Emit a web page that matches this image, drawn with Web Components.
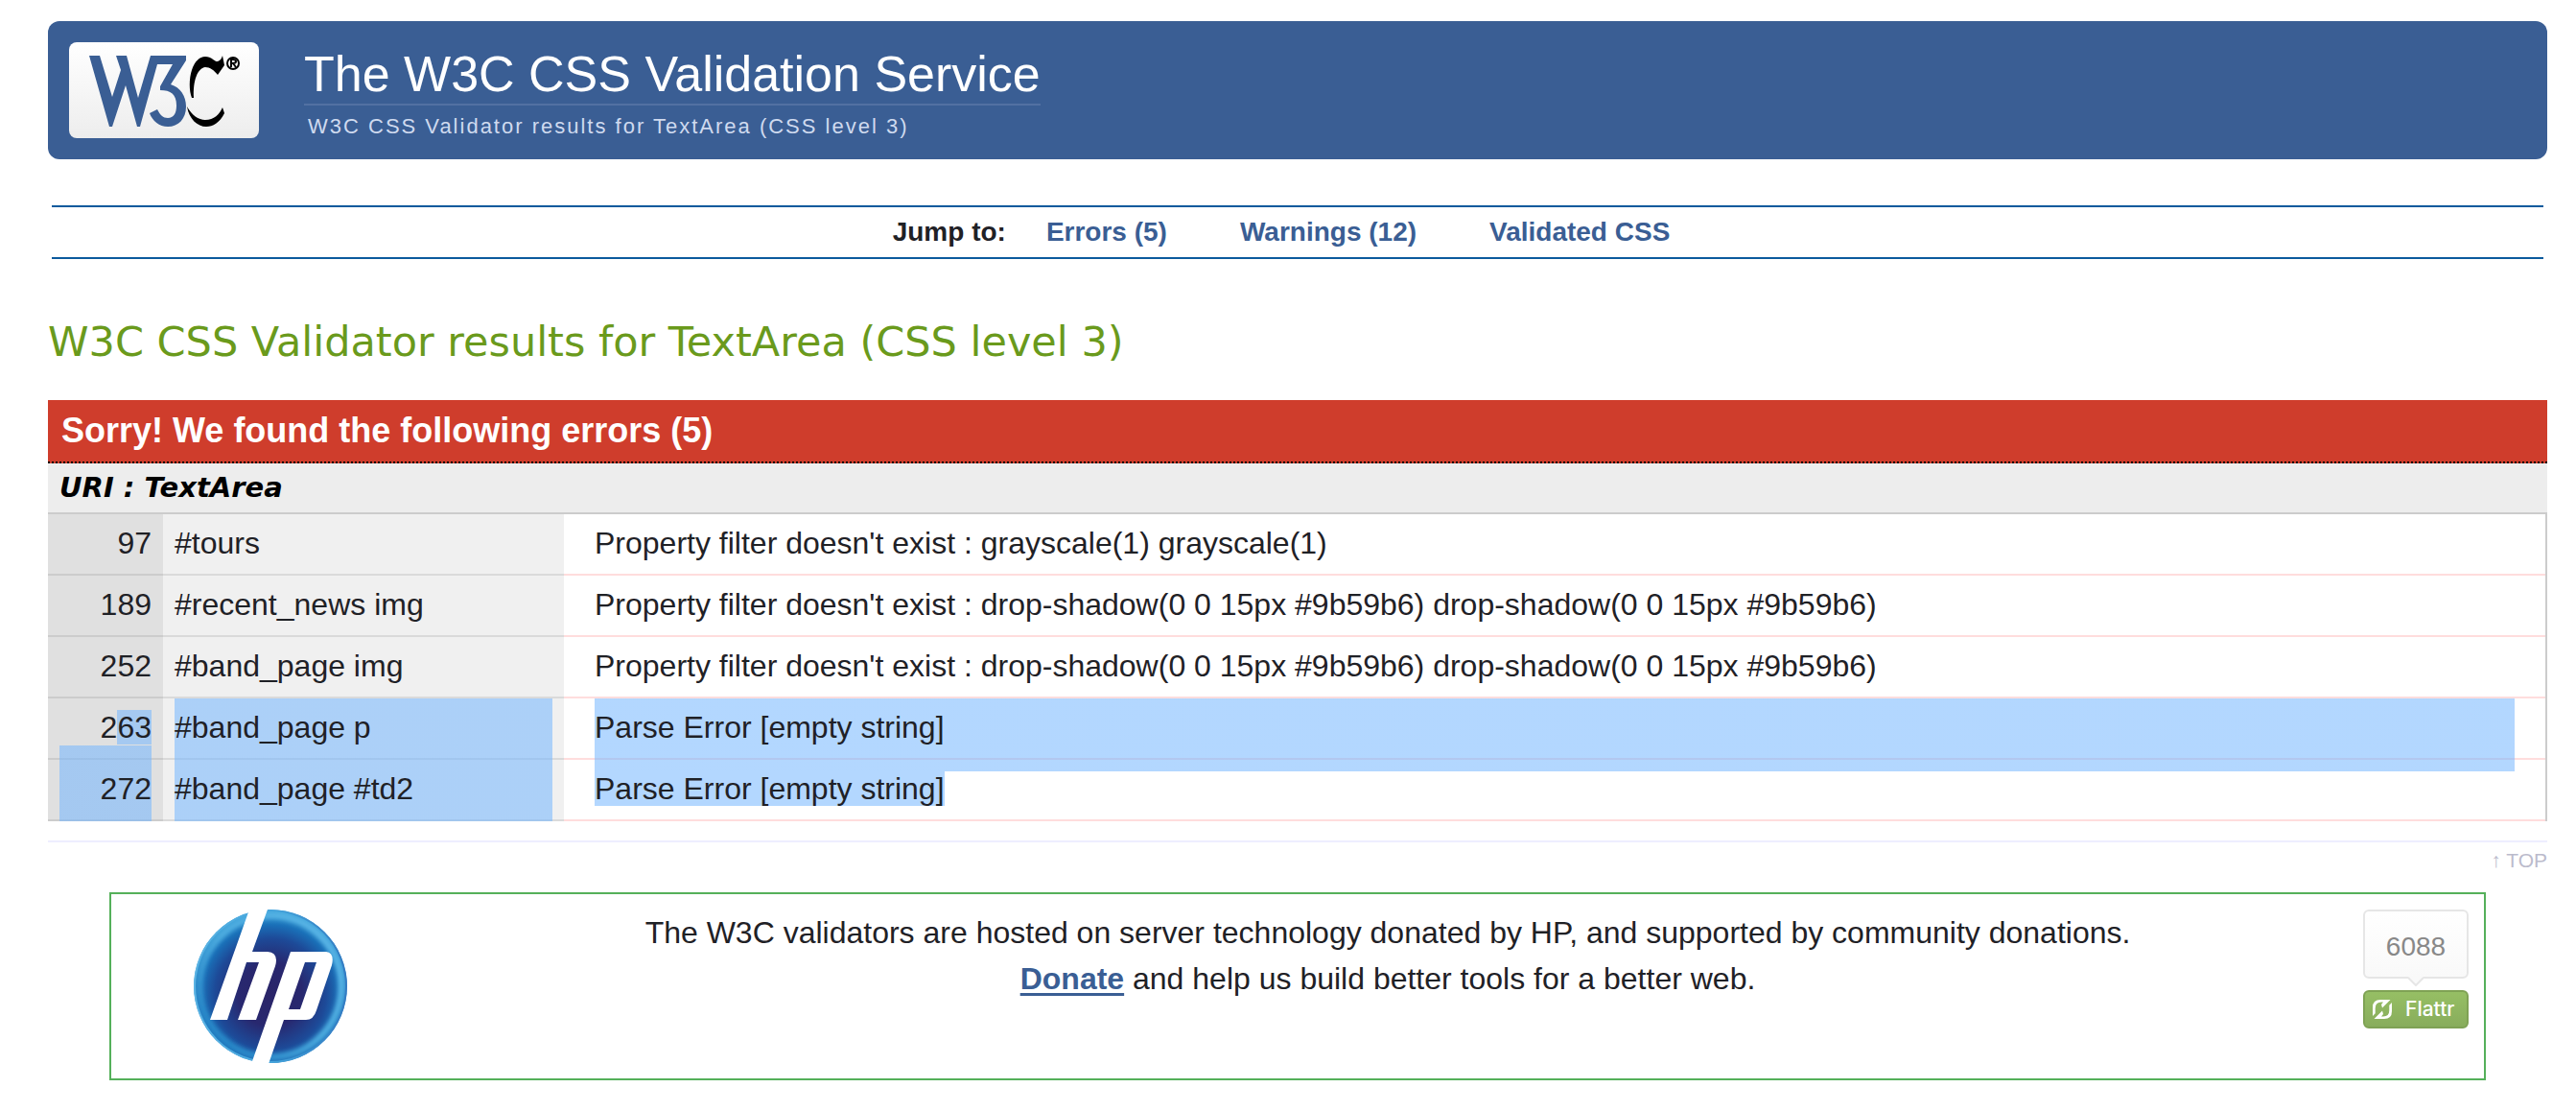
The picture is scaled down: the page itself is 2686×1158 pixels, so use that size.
<!DOCTYPE html>
<html lang="en">
<head>
<meta charset="utf-8">
<meta name="viewport" content="width=device-width, initial-scale=1">
<title>W3C CSS Validator results for TextArea (CSS level 3)</title>
<style>
  body {
    margin: 0;
    background: #fff;
    color: #1f2126;
    font-family: "Liberation Sans", Arial, sans-serif;
    font-size: 32px;
  }
</style>
</head>
<body>
<validator-page></validator-page>

<script>
  class ShadowElement extends HTMLElement {
    constructor() {
      super();
      this.attachShadow({ mode: 'open' }).innerHTML = this.constructor.markup;
    }
  }

  class W3cLogo extends ShadowElement {
    static markup = `
      <style>
        :host { display: block; }
        svg { display: block; width: 198px; height: 100px; border-radius: 8px;
              background: linear-gradient(#fff, #ededed); }
      </style>
      <svg viewBox="0 0 198 100" role="img" aria-label="W3C">
        <path fill="#3a5e94" d="M21 14H32L45 57 54 29 49 14H60L72 58 85 14H122V19L106 44C116 47 122 56 122 67C122 80 114 88 103 88C94 88 87 82 84 74L92 70C95 76 98 79 103 79C109 79 112 74 112 66C112 54 106 50 95 50V46L108 23H92L74 88H71L59 45 45 88H42Z"/>
        <path d="M160 14L162 24 155 34C151 29 147 26 142 26C134 27 129 40 130 58H128C125 51 125 38 128 29C131 20 136 15 142 15C149 15 152 21 155 20C158 19 159 17 160 14Z"/>
        <path d="M123 67C128 76 135 81 142 81C151 81 157 75 160 68L162 74C157 84 150 88 143 88C134 88 125 80 123 67Z"/>
        <circle cx="171" cy="22" r="6" fill="none" stroke="#000" stroke-width="2"/>
        <path fill="none" stroke="#000" stroke-width="2" d="M169 26V18H171Q174 18 174 20Q174 22 171 22H169M171 22L174 26"/>
      </svg>`;
  }

  class SiteBanner extends ShadowElement {
    static markup = `
      <style>
        :host { display: block; }
        header { display: flex; align-items: flex-start; gap: 47px; min-height: 122px;
                 padding: 22px 22px 0; background: #3a5e94; border-radius: 12px; }
        h1 { margin: 0; padding-top: 2px; border-bottom: 2px solid #5271a2; color: #fff;
             font-size: 52px; font-weight: normal; line-height: 62px; }
        p { margin: 0; padding: 6px 4px 0; color: #cfdaef; font-size: 22px; line-height: 32px;
            letter-spacing: 2px; }
      </style>
      <header>
        <w3c-logo></w3c-logo>
        <div>
          <h1><slot name="title"></slot></h1>
          <p><slot name="tagline"></slot></p>
        </div>
      </header>`;
  }

  class JumpNav extends ShadowElement {
    static markup = `
      <style>
        :host { display: block; margin: 48px 4px 0; }
        nav { display: flex; justify-content: center; gap: 8px; border: 2px solid #0b5a9d;
              border-width: 2px 0; font-size: 28px; font-weight: bold; line-height: 52px; }
        ::slotted(a) { padding: 0 34px; color: #3a5e94; text-decoration: none; }
      </style>
      <nav aria-label="Jump to"><span>Jump to:</span><slot></slot></nav>`;
  }

  class ErrorReport extends ShadowElement {
    static markup = `
      <style>
        :host { display: block; --sel: rgb(114 181 255 / .54);
                --fill: linear-gradient(var(--sel), var(--sel)); }
        h3 { margin: 0; padding: 0 14px; background: #cf3d2c; border-bottom: 2px dotted #000;
             color: #fff; font-size: 36px; line-height: 64px; }
        h4 { margin: 0; padding: 0 12px; background: #ededed; border-bottom: 2px solid #ccc;
             color: #000; font: italic bold 29px/51px "DejaVu Sans", Verdana, sans-serif; }
        table { width: 100%; border-collapse: separate; border-spacing: 0; table-layout: fixed; }
        .line { width: 120px; }
        .context { width: 418px; }
        td { padding: 0 12px 4px; line-height: 60px; --under: linear-gradient(var(--rule), var(--rule)) 0 100% / 100% 2px no-repeat; }
        td:nth-child(1) { --rule: #ccc; background: var(--under) #e0e0e0; text-align: right; }
        td:nth-child(2) { --rule: #dadada; background: var(--under) #f0f0f0; }
        td:nth-child(3) { --rule: #fdd; background: var(--under); padding-left: 32px;
                          border-right: 2px solid #ccc; }
        mark { background: var(--sel); color: inherit; }
        tr.from td:nth-child(1) { background: var(--fill) 12px 100% / calc(100% - 24px) 15px no-repeat, var(--under) #e0e0e0; }
        tr.to td:nth-child(1) { background: var(--fill) 12px 0 / calc(100% - 24px) 100% no-repeat, var(--under) #e0e0e0; }
        tr.from td:nth-child(2), tr.to td:nth-child(2) { background: var(--fill) 12px 0 / calc(100% - 24px) 100% no-repeat, var(--under) #f0f0f0; }
        tr.from td:nth-child(3) { background: var(--fill) 32px 0 / calc(100% - 64px) 100% no-repeat, var(--under); }
        tr.to td:nth-child(3) { background: var(--fill) 32px 0 / calc(100% - 64px) 12px no-repeat, var(--under); }
      </style>
      <h3>Sorry! We found the following errors (5)</h3>
      <h4>URI : TextArea</h4>
      <table>
        <colgroup><col class="line"><col class="context"><col></colgroup>
        <tbody>
          <tr><td>97</td><td>#tours</td><td>Property filter doesn't exist : grayscale(1) grayscale(1)</td></tr>
          <tr><td>189</td><td>#recent_news img</td><td>Property filter doesn't exist : drop-shadow(0 0 15px #9b59b6) drop-shadow(0 0 15px #9b59b6)</td></tr>
          <tr><td>252</td><td>#band_page img</td><td>Property filter doesn't exist : drop-shadow(0 0 15px #9b59b6) drop-shadow(0 0 15px #9b59b6)</td></tr>
          <tr class="from"><td>2<mark>63</mark></td><td>#band_page p</td><td>Parse Error [empty string]</td></tr>
          <tr class="to"><td>272</td><td>#band_page #td2</td><td><mark>Parse Error [empty string]</mark></td></tr>
        </tbody>
      </table>`;
  }

  class TopLink extends ShadowElement {
    static markup = `
      <style>
        :host { display: flex; justify-content: flex-end; margin-top: 20px; border-top: 2px solid #eef; }
        a { color: #bbc; font-size: 21px; line-height: 38px; text-decoration: none; }
      </style>
      <a href="#top">↑ TOP</a>`;
  }

  class HpLogo extends ShadowElement {
    static markup = `
      <style>
        :host { display: block; }
        svg { display: block; width: 160px; height: 160px; }
      </style>
      <svg viewBox="0 0 160 160" role="img" aria-label="HP">
        <defs>
          <radialGradient id="disc" gradientUnits="userSpaceOnUse" cx="80" cy="88" r="88">
            <stop offset="0" stop-color="#2a2468"/>
            <stop offset=".38" stop-color="#28286f"/>
            <stop offset=".66" stop-color="#1d4a98"/>
            <stop offset=".82" stop-color="#1a70b8"/>
            <stop offset="1" stop-color="#45b0e2"/>
          </radialGradient>
          <linearGradient id="rim" x1="0" y1="1" x2="1" y2="0">
            <stop offset="0" stop-color="#1878be"/>
            <stop offset=".5" stop-color="#4cabdf"/>
            <stop offset="1" stop-color="#5db8e8"/>
          </linearGradient>
          <linearGradient id="edge" x1="0" y1="0" x2="1" y2="0">
            <stop offset="0" stop-color="#5cb4e4"/>
            <stop offset=".5" stop-color="#45a5dc"/>
            <stop offset="1" stop-color="#347bc2"/>
          </linearGradient>
          <filter id="soft" x="-20%" y="-20%" width="140%" height="140%"><feGaussianBlur stdDeviation="2"/></filter>
          <clipPath id="round"><circle cx="80" cy="80" r="80"/></clipPath>
        </defs>
        <g clip-path="url(#round)">
          <circle cx="80" cy="80" r="80" fill="url(#disc)"/>
          <circle cx="80" cy="80" r="74" fill="none" stroke="url(#rim)" stroke-width="7" filter="url(#soft)"/>
          <circle cx="80" cy="80" r="80" fill="none" stroke="url(#edge)" stroke-width="4"/>
        </g>
        <path fill="#fff" d="M58 0H77L61 44H77Q89 45 85 59L65 115H46L68 55H55L35 115H17Z"/>
        <path fill="#fff" fill-rule="evenodd" d="M101 44H138Q147 45 144 58L128 105Q125 115 117 115H94L78 161H60ZM116 55L99 104H111L128 55Z"/>
      </svg>`;
  }

  class FlattrBadge extends ShadowElement {
    static markup = `
      <style>
        :host { display: flex; flex-direction: column; gap: 12px; width: 110px; }
        .count { position: relative; box-sizing: border-box; height: 72px; border: 2px solid #e6e6e6;
                 border-radius: 6px; background: linear-gradient(#fff, #f9f9f9); color: #888;
                 font-size: 28px; line-height: 74px; text-align: center; }
        .count svg { position: absolute; left: 45px; top: 68px; width: 16px; height: 10px; }
        button { display: flex; align-items: center; gap: 14px; box-sizing: border-box; height: 40px;
                 margin: 0; padding: 0 8px; border: 2px solid #7fa254; border-radius: 6px;
                 background: linear-gradient(#96bf64, #88ad5c); color: #fff;
                 font: 500 21px/24px Inter, sans-serif; }
        button svg { width: 20px; height: 20px; flex: none; }
      </style>
      <div class="count">6088
        <svg viewBox="0 0 16 10" aria-hidden="true"><path d="M0 0H16L8 8Z" fill="#f9f9f9"/><path d="M0 1L8 9 16 1" fill="none" stroke="#e6e6e6" stroke-width="2"/></svg>
      </div>
      <button type="button">
        <svg viewBox="0 0 20 20" aria-hidden="true" fill="#fff">
          <path d="M0 17V8Q0 0 8 0H18.500L10 8.500 9 5 11 2.500H9Q2.700 2.500 2.700 9V14.300Z"/>
          <path d="M20 3V12Q20 20 12 20H1.500L10 11.500 11 15 9 17.500H11Q17.300 17.500 17.300 11V5.700Z"/>
        </svg>
        <span>Flattr</span>
      </button>`;
  }

  class DonationBox extends ShadowElement {
    static markup = `
      <style>
        :host { display: flex; align-items: flex-start; margin: 14px 64px 0; padding: 16px 16px 16px 86px;
                border: 2px solid #55b05a; }
        p { flex: 1; margin: 0; padding-right: 74px; padding-left: 142px; line-height: 48px; text-align: center; }
        a { color: #3a5e94; font-weight: bold; text-decoration: underline 3px; text-underline-offset: 4px; }
      </style>
      <hp-logo></hp-logo>
      <p>The W3C validators are hosted on server technology donated by HP, and supported by community donations.<br><a href="#donate">Donate</a> and help us build better tools for a better web.</p>
      <flattr-badge></flattr-badge>`;
  }

  class ValidatorPage extends ShadowElement {
    static markup = `
      <style>
        :host { display: block; padding: 22px 30px 32px 50px; }
        h2 { margin: 58px 0 32px; color: #6a9a1c; font: normal 43px/57px "DejaVu Sans", Verdana, sans-serif; }
      </style>
      <site-banner>
        <span slot="title">The W3C CSS Validation Service</span>
        <span slot="tagline">W3C CSS Validator results for TextArea (CSS level 3)</span>
      </site-banner>
      <jump-nav>
        <a href="#errors">Errors (5)</a>
        <a href="#warnings">Warnings (12)</a>
        <a href="#css">Validated CSS</a>
      </jump-nav>
      <main>
        <h2>W3C CSS Validator results for TextArea (CSS level 3)</h2>
        <error-report id="errors"></error-report>
        <top-link></top-link>
      </main>
      <donation-box></donation-box>`;
  }

  customElements.define('w3c-logo', W3cLogo);
  customElements.define('site-banner', SiteBanner);
  customElements.define('jump-nav', JumpNav);
  customElements.define('error-report', ErrorReport);
  customElements.define('top-link', TopLink);
  customElements.define('hp-logo', HpLogo);
  customElements.define('flattr-badge', FlattrBadge);
  customElements.define('donation-box', DonationBox);
  customElements.define('validator-page', ValidatorPage);
</script>
</body>
</html>
